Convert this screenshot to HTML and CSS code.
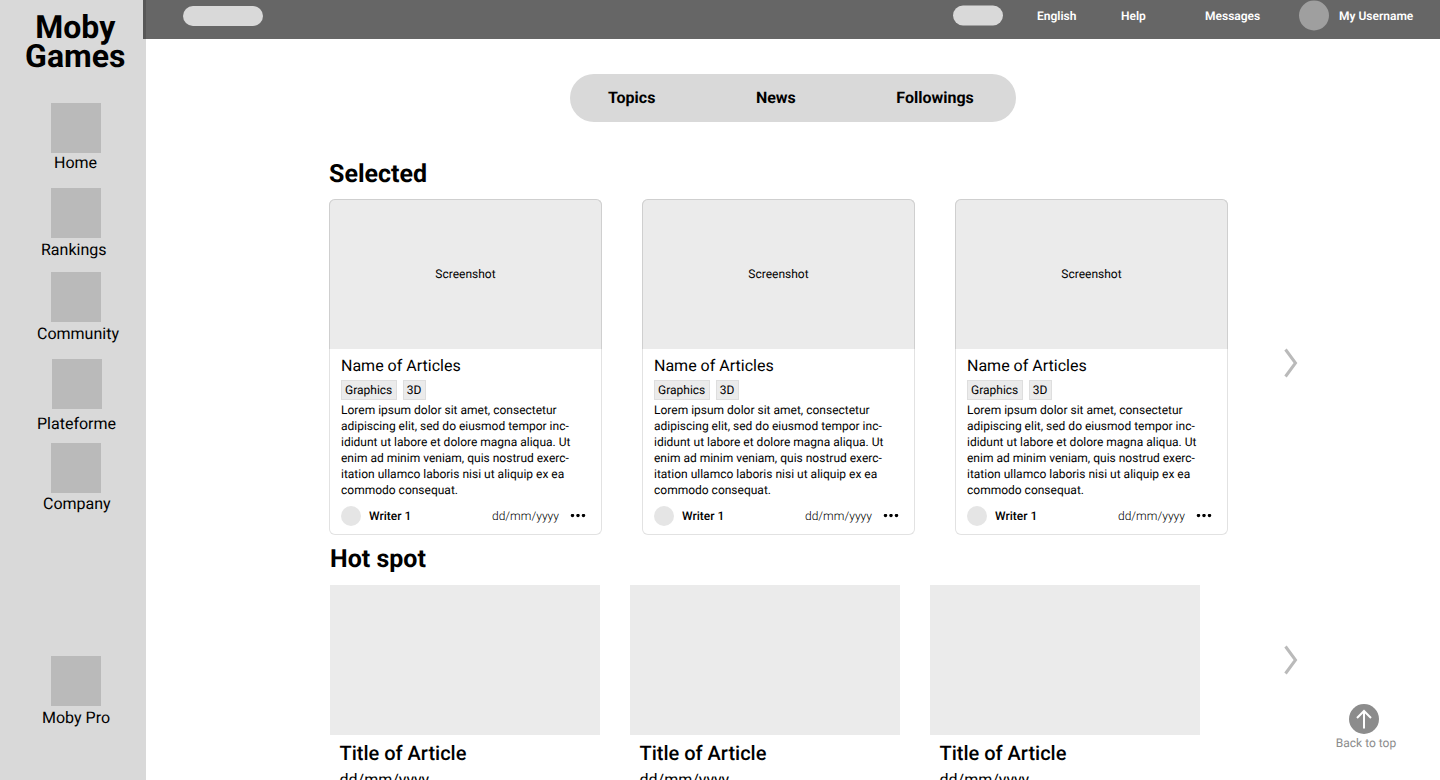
FILE: index.html
```html
<!DOCTYPE html>
<html lang="en">
<head>
<meta charset="utf-8">
<title>Moby Games</title>
<link rel="stylesheet" href="styles.css">
</head>
<body>
<div class="app">
  <aside class="sidebar">
    <h1 class="brand">Moby<br>Games</h1>
    <a class="side-item home"><span class="side-icon"></span><span class="side-label">Home</span></a>
    <a class="side-item rankings"><span class="side-icon"></span><span class="side-label">Rankings</span></a>
    <a class="side-item community"><span class="side-icon"></span><span class="side-label">Community</span></a>
    <a class="side-item plateforme"><span class="side-icon"></span><span class="side-label">Plateforme</span></a>
    <a class="side-item company"><span class="side-icon"></span><span class="side-label">Company</span></a>
    <a class="side-item pro"><span class="side-icon"></span><span class="side-label">Moby Pro</span></a>
  </aside>
  <div class="page">
    <header class="topbar">
      <span class="search-pill"></span>
      <nav class="top-links">
        <svg class="toggle-pill" width="50" height="21" viewBox="0 0 50 21"><rect y=".5" width="50" height="20" rx="10" fill="#d9d9d9"/></svg>
        <a class="link-english">English</a>
        <a class="link-help">Help</a>
        <a class="link-messages">Messages</a>
        <svg class="avatar" width="30" height="31" viewBox="0 0 30 31"><circle cx="15" cy="15.5" r="15" fill="#9f9f9f"/></svg>
        <a class="link-user">My Username</a>
      </nav>
    </header>
    <main class="content">
      <nav class="tabs"><a>Topics</a><a>News</a><a>Followings</a></nav>
      <section class="selected">
        <h2 class="section-title">Selected</h2>
        <div class="row">
          <div class="cards">
            <article class="card">
              <div class="shot">Screenshot</div>
              <div class="card-body">
                <h3 class="card-name">Name of Articles</h3>
                <div class="tags"><span class="tag">Graphics</span><span class="tag">3D</span></div>
                <p class="excerpt">Lorem ipsum dolor sit amet, consectetur<br>adipiscing elit, sed do eiusmod tempor inc-<br>ididunt ut labore et dolore magna aliqua. Ut<br>enim ad minim veniam, quis nostrud exerc-<br>itation ullamco laboris nisi ut aliquip ex ea<br>commodo consequat.</p>
                <footer class="meta"><span class="writer-pic"></span><span class="writer">Writer 1</span><span class="date">dd/mm/yyyy</span><svg class="dots" width="16" height="4" viewBox="0 0 16 4"><circle cx="2.5" cy="1.5" r="1.7"/><circle cx="8" cy="1.5" r="1.7"/><circle cx="13.5" cy="1.5" r="1.7"/></svg></footer>
              </div>
            </article>
            <article class="card">
              <div class="shot">Screenshot</div>
              <div class="card-body">
                <h3 class="card-name">Name of Articles</h3>
                <div class="tags"><span class="tag">Graphics</span><span class="tag">3D</span></div>
                <p class="excerpt">Lorem ipsum dolor sit amet, consectetur<br>adipiscing elit, sed do eiusmod tempor inc-<br>ididunt ut labore et dolore magna aliqua. Ut<br>enim ad minim veniam, quis nostrud exerc-<br>itation ullamco laboris nisi ut aliquip ex ea<br>commodo consequat.</p>
                <footer class="meta"><span class="writer-pic"></span><span class="writer">Writer 1</span><span class="date">dd/mm/yyyy</span><svg class="dots" width="16" height="4" viewBox="0 0 16 4"><circle cx="2.5" cy="1.5" r="1.7"/><circle cx="8" cy="1.5" r="1.7"/><circle cx="13.5" cy="1.5" r="1.7"/></svg></footer>
              </div>
            </article>
            <article class="card">
              <div class="shot">Screenshot</div>
              <div class="card-body">
                <h3 class="card-name">Name of Articles</h3>
                <div class="tags"><span class="tag">Graphics</span><span class="tag">3D</span></div>
                <p class="excerpt">Lorem ipsum dolor sit amet, consectetur<br>adipiscing elit, sed do eiusmod tempor inc-<br>ididunt ut labore et dolore magna aliqua. Ut<br>enim ad minim veniam, quis nostrud exerc-<br>itation ullamco laboris nisi ut aliquip ex ea<br>commodo consequat.</p>
                <footer class="meta"><span class="writer-pic"></span><span class="writer">Writer 1</span><span class="date">dd/mm/yyyy</span><svg class="dots" width="16" height="4" viewBox="0 0 16 4"><circle cx="2.5" cy="1.5" r="1.7"/><circle cx="8" cy="1.5" r="1.7"/><circle cx="13.5" cy="1.5" r="1.7"/></svg></footer>
              </div>
            </article>
          </div>
          <svg class="next" width="16" height="32" viewBox="0 0 16 32"><path d="M1.5 2.5 11.5 16 1.5 29.5"/></svg>
        </div>
      </section>
      <section class="hot">
        <h2 class="section-title">Hot spot</h2>
        <div class="row">
          <div class="stories">
            <article class="story"><div class="story-shot"></div><h3 class="story-title">Title of Article</h3><p class="story-date">dd/mm/yyyy</p></article>
            <article class="story"><div class="story-shot"></div><h3 class="story-title">Title of Article</h3><p class="story-date">dd/mm/yyyy</p></article>
            <article class="story"><div class="story-shot"></div><h3 class="story-title">Title of Article</h3><p class="story-date">dd/mm/yyyy</p></article>
          </div>
          <svg class="next" width="16" height="32" viewBox="0 0 16 32"><path d="M1.5 2.5 11.5 16 1.5 29.5"/></svg>
        </div>
      </section>
    </main>
  </div>
  <a class="to-top">
    <svg width="30" height="30" viewBox="0 0 30 30"><circle cx="15" cy="15" r="15"/><path d="M15 24.5V7M8 14l7-7 7 7"/></svg>
    <span>Back to top</span>
  </a>
</div>
</body>
</html>
```
FILE: styles.css
```css
* { box-sizing: border-box; }
html, body { height: 100%; overflow: hidden; }
body { margin: 0; background: #fff; color: #000; font-family: Roboto, sans-serif; text-rendering: geometricPrecision; }
h1, h2, h3, p { margin: 0; }

.app { display: flex; height: 780px; overflow: hidden; }

.sidebar { display: flex; flex-direction: column; flex: none; width: 146px; padding-top: 13px; background: #d9d9d9; }
.brand { height: 90px; margin-left: 4.5px; font-size: 32px; line-height: 29px; font-weight: 700; text-align: center; }
.side-item { display: flex; flex-direction: column; align-items: flex-start; }
.side-icon { width: 50px; height: 50px; margin-left: 51px; background: #bababa; }
.side-label { font-size: 16px; line-height: 19px; white-space: nowrap; }
.home { height: 85px; }
.home .side-label { margin-left: 54px; }
.rankings { height: 84px; }
.rankings .side-label { margin: 2px 0 0 41px; }
.community { height: 87px; }
.community .side-label { margin: 2px 0 0 37px; }
.plateforme { height: 84px; }
.plateforme .side-icon { margin-left: 52px; }
.plateforme .side-label { margin: 5px 0 0 37px; }
.company { height: 213px; }
.company .side-label { margin: 1px 0 0 43px; }
.pro .side-label { margin: 2px 0 0 42px; }

.page { flex: 1; min-width: 0; }
.topbar { position: relative; display: flex; align-items: flex-start; justify-content: space-between; height: 39px; margin-left: -3px; padding-left: 40px; background: rgba(0, 0, 0, .6); color: #fff; }
.search-pill { width: 80px; height: 20px; margin-top: 6px; border-radius: 10px; background: #d9d9d9; }
.top-links { display: flex; align-items: center; width: 487px; height: 31px; font-size: 12px; line-height: 14px; font-weight: 600; white-space: nowrap; }
.top-links a { padding-top: 1px; }
.toggle-pill, .avatar { flex: none; }
.link-english { width: 84px; margin-left: 34px; }
.link-help { width: 84px; }
.link-messages { width: 94px; }
.link-user { margin-left: 10px; }

.content { padding: 35px 0 0 183px; }
.tabs { display: flex; gap: 100.5px; width: 446px; height: 48px; margin-left: 241px; padding: 14px 38px; border-radius: 24px; background: #d9d9d9; font-size: 16px; line-height: 19px; font-weight: 700; }
.section-title { font-size: 25px; line-height: 30px; font-weight: 700; }
.selected .section-title { margin: 38px 0 9px; }
.row { display: flex; align-items: flex-start; }
.cards { display: flex; gap: 40px; }
.card { width: 273px; height: 336px; border-radius: 6px; border: 1px solid #e2e2e2; border-top: 0; }
.shot { display: flex; align-items: center; justify-content: center; height: 150px; margin: 0 -1px; padding-bottom: 1px; border: 1px solid #cfcfcf; border-bottom: 0; border-radius: 6px 6px 0 0; background: #ebebeb; font-size: 12px; line-height: 14px; }
.card-body { padding: 7px 11px 0; }
.card-name { font-size: 16px; line-height: 19px; font-weight: 400; }
.tags { display: flex; gap: 6px; margin-top: 5px; }
.tag { height: 20px; padding: 2px 3.4px 2px 3px; border: 1px solid #dedede; background: #ebebeb; font-size: 12px; line-height: 14px; }
.excerpt { margin-top: 2px; font-size: 12px; line-height: 16px; white-space: nowrap; }
.meta { display: flex; align-items: center; height: 20px; margin-top: 8px; font-size: 12px; line-height: 14px; }
.writer-pic { width: 20px; height: 20px; border-radius: 50%; background: #e5e5e5; }
.writer { margin-left: 8px; font-weight: 500; }
.date { margin-left: auto; font-weight: 300; }
.dots { width: 16px; margin: 0 4px 0 11px; }
.next { margin: 148px 0 0 56px; fill: none; stroke: #bababa; stroke-width: 3; }

.hot { padding: 10px 0 0 1px; }
.hot .section-title { margin-bottom: 9.5px; }
.stories { display: flex; gap: 30px; }
.story { width: 270px; }
.story-shot { height: 150px; background: #ebebeb; }
.story-title { margin: 6.5px 0 0 9.5px; font-size: 20px; line-height: 24px; font-weight: 500; }
.story-date { margin: 5px 0 0 9.5px; font-size: 16px; line-height: 19px; }
.hot .next { margin: 59.5px 0 0 84px; }

.to-top { position: absolute; left: 1324px; top: 704px; display: flex; flex-direction: column; align-items: center; width: 84px; color: #8c8c8c; font-size: 12px; line-height: 14px; }
.to-top svg { margin: 0 4px 2px 0; fill: #8c8c8c; }
.to-top path { fill: none; stroke: #fff; stroke-width: 2; }
```
